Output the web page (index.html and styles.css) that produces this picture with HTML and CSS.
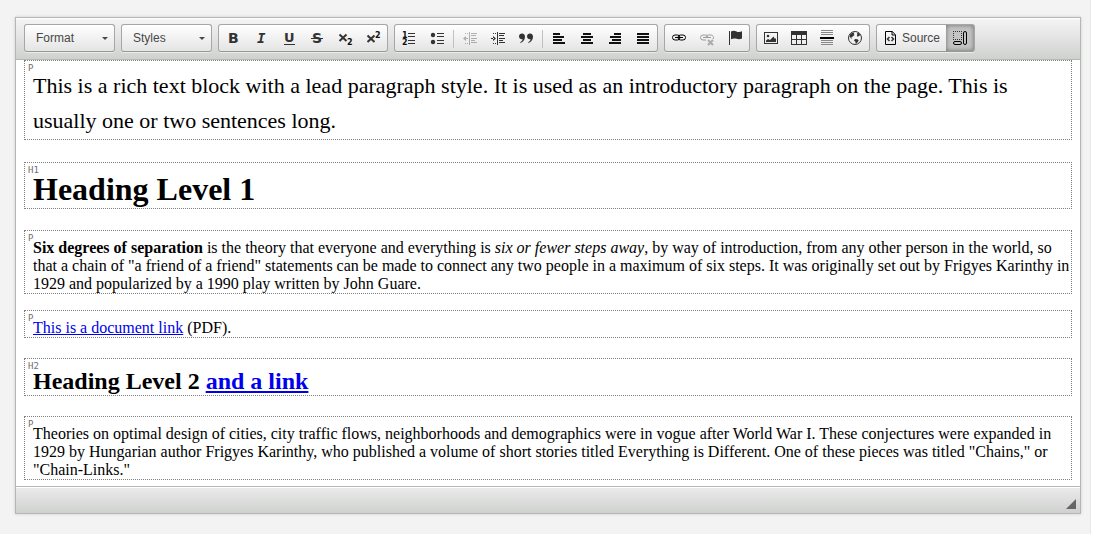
FILE: index.html
```html
<!DOCTYPE html>
<html lang="en">
<head>
<meta charset="utf-8">
<title>Rich text editor</title>
<link rel="stylesheet" href="styles.css">
</head>
<body>
<main class="panel">
<div class="editor">
  <div class="toolbar" role="toolbar" aria-label="Editor toolbar">
    <div class="combo">
      <select class="combo-select" aria-label="Format"><option>Format</option></select>
      <svg class="combo-arrow" viewBox="0 0 6 3" aria-hidden="true"><path d="M0 0h6L3 3z"/></svg>
    </div>
    <div class="combo">
      <select class="combo-select" aria-label="Styles"><option>Styles</option></select>
      <svg class="combo-arrow" viewBox="0 0 6 3" aria-hidden="true"><path d="M0 0h6L3 3z"/></svg>
    </div>

    <div class="group">
      <button class="tool" type="button" aria-label="Bold"><svg class="icon" viewBox="0 0 16 16"><text class="letter" x="3" y="13">B</text></svg></button>
      <button class="tool" type="button" aria-label="Italic"><svg class="icon" viewBox="0 0 16 16"><text class="letter letter-italic" x="4" y="13">I</text></svg></button>
      <button class="tool" type="button" aria-label="Underline"><svg class="icon" viewBox="0 0 16 16"><text class="letter letter-small" x="3" y="12">U</text><path d="M3 14h11v1H3z"/></svg></button>
      <button class="tool" type="button" aria-label="Strikethrough"><svg class="icon" viewBox="0 0 16 16"><text class="letter" x="3" y="13">S</text><path d="M2 8h12v1H2z"/></svg></button>
      <button class="tool" type="button" aria-label="Subscript"><svg class="icon" viewBox="0 0 16 16"><path class="bold-line" d="M2.500 4.500L9.500 11M9.500 4.500l-7 6.500"/><text class="digit" x="10" y="15">2</text></svg></button>
      <button class="tool" type="button" aria-label="Superscript"><svg class="icon" viewBox="0 0 16 16"><path class="bold-line" d="M2.500 5.500L9.500 12M9.500 5.500l-7 6.500"/><text class="digit" x="10" y="8">2</text></svg></button>
    </div>

    <div class="group">
      <button class="tool" type="button" aria-label="Numbered list"><svg class="icon" viewBox="0 0 16 16"><text class="digit" x="1" y="8">1</text><text class="digit" x="1" y="15">2</text><path d="M7 3h7v1H7zM7 6h7v1H7zM7 10h7v1H7zM7 13h7v1H7z"/></svg></button>
      <button class="tool" type="button" aria-label="Bulleted list"><svg class="icon" viewBox="0 0 16 16"><circle cx="4" cy="5" r="2.200"/><circle cx="4" cy="12" r="2.200"/><path d="M8 3h7v1H8zM8 6h7v1H8zM8 10h7v1H8zM8 13h7v1H8z"/></svg></button>
      <span class="separator"></span>
      <button class="tool" type="button" aria-label="Decrease indent" disabled><svg class="icon" viewBox="0 0 16 16"><path d="M7 2h1v13H7zM9 3h6v1H9zM9 5h5v1H9zM9 8h6v1H9zM9 10h4v1H9zM9 12h6v1H9zM3 3h1v1H3zM5 3h1v1H5zM3 13h1v1H3zM5 13h1v1H5zM3 8h3v1H3zM1 8.500L4 6v5z"/></svg></button>
      <button class="tool" type="button" aria-label="Increase indent"><svg class="icon" viewBox="0 0 16 16"><path d="M7 2h1v13H7zM9 3h6v1H9zM9 5h5v1H9zM9 8h6v1H9zM9 10h4v1H9zM9 12h6v1H9zM3 3h1v1H3zM5 3h1v1H5zM3 13h1v1H3zM5 13h1v1H5zM1 8h3v1H1zM6 8.500L3 6v5z"/></svg></button>
      <button class="tool" type="button" aria-label="Block quote"><svg class="icon" viewBox="0 0 16 16"><path d="M4 3.500c2 0 3 1.500 3 3.300 0 3-1.700 5.200-4.500 6.200l-.3-.8c1.500-.8 2.300-1.800 2.400-3C2.600 9.500 1 8.300 1 6.500c0-1.700 1.300-3 3-3zM12 3.500c2 0 3 1.500 3 3.300 0 3-1.700 5.200-4.500 6.200l-.3-.8c1.500-.8 2.300-1.800 2.400-3C10.600 9.500 9 8.300 9 6.500c0-1.700 1.300-3 3-3z"/></svg></button>
      <span class="separator"></span>
      <button class="tool" type="button" aria-label="Align left"><svg class="icon dark" viewBox="0 0 16 16"><path d="M2 3h7v2H2zM2 6h11v2H2zM2 9h9v2H2zM2 12h12v2H2z"/></svg></button>
      <button class="tool" type="button" aria-label="Center"><svg class="icon dark" viewBox="0 0 16 16"><path d="M4 3h8v2H4zM2 6h12v2H2zM4 9h8v2H4zM2 12h12v2H2z"/></svg></button>
      <button class="tool" type="button" aria-label="Align right"><svg class="icon dark" viewBox="0 0 16 16"><path d="M7 3h7v2H7zM3 6h11v2H3zM5 9h9v2H5zM2 12h12v2H2z"/></svg></button>
      <button class="tool" type="button" aria-label="Justify"><svg class="icon dark" viewBox="0 0 16 16"><path d="M2 3h12v2H2zM2 6h12v2H2zM2 9h12v2H2zM2 12h12v2H2z"/></svg></button>
    </div>

    <div class="group">
      <button class="tool" type="button" aria-label="Link"><svg class="icon" viewBox="0 0 16 16"><g class="line line-heavy"><rect x="1.500" y="5" width="7.500" height="5" rx="2.500"/><rect x="7" y="5" width="7.500" height="5" rx="2.500"/><path d="M4 7.500h8"/></g></svg></button>
      <button class="tool" type="button" aria-label="Unlink" disabled><svg class="icon" viewBox="0 0 16 16"><g class="line line-heavy"><path d="M7 10H4a2.500 2.500 0 010-5h2.500A2.500 2.500 0 019 7.500M7 8a2.500 2.500 0 012.500-3H12a2.500 2.500 0 012 4M4 7.500h8"/></g><path class="bold-line" d="M9 10l5 5M14 10l-5 5"/></svg></button>
      <button class="tool" type="button" aria-label="Anchor"><svg class="icon" viewBox="0 0 16 16"><path d="M2 1h1v14H2z"/><path d="M4 1.500c2-1 4-.7 5.500 0 1.800.8 3.700.6 5.500-.3v7.300c-1.800.9-3.700 1-5.500.3C8 8.200 6 8.200 4 9.200z"/></svg></button>
    </div>

    <div class="group">
      <button class="tool" type="button" aria-label="Image"><svg class="icon" viewBox="0 0 16 16"><path fill-rule="evenodd" d="M1 2h14v12H1zM2 3v10h12V3z"/><circle cx="5" cy="6" r="1.300"/><path d="M3 12v-1.500L5 9l2 1 3.500-3.500L12 9l1-1v4z"/></svg></button>
      <button class="tool" type="button" aria-label="Table"><svg class="icon" viewBox="0 0 16 16"><path fill-rule="evenodd" d="M0 1h16v14H0zM1 5v4h4V5zM6 5v4h4V5zM11 5v4h4V5zM1 10v4h4v-4zM6 10v4h4v-4zM11 10v4h4v-4z"/></svg></button>
      <button class="tool" type="button" aria-label="Horizontal line"><svg class="icon" viewBox="0 0 16 16"><path class="soft" d="M2 0h12v1H2zM2 2h12v1H2zM2 4h12v1H2zM2 10h12v1H2zM2 12h12v1H2zM2 14h12v1H2z"/><path class="black" d="M1 7h14v2H1z"/></svg></button>
      <button class="tool" type="button" aria-label="Special content"><svg class="icon" viewBox="0 0 16 16"><circle class="line" cx="8" cy="8" r="6.500"/><path d="M3 4.500L5.500 2.500l2 .3-.8 1.400.8.8-2 1.800-1.300.2 1 1.500-1 0L2.500 6.500zM10 2.500l2 .8 1.500 2.200-1.500.3-1 1-1.200-.8.5-1.500zM8 9l2.500.3 1.200 1.200-1.700 2.500-1.300.8-.3-2L7 10.500z"/></svg></button>
    </div>

    <div class="group">
      <button class="tool tool-text" type="button"><svg class="icon" viewBox="0 0 16 16"><path class="line line-heavy" d="M2.500 1.500h6.700l3.300 3.300v9.700h-10zM9 1.500V5h3.500"/><path class="mark" d="M6.500 7L4.500 9l2 2M8.500 7l2 2-2 2"/></svg><span>Source</span></button>
      <button class="tool tool-pressed" type="button" aria-label="Show blocks" aria-pressed="true"><svg class="icon" viewBox="0 0 16 16"><path class="dots" d="M1 1.500h9M1 9.500h9M1.500 1v9M9.500 1v9"/><rect class="line line-heavy" x="1.500" y="11.500" width="8" height="3" rx="1.500"/><rect class="line line-heavy" x="11.500" y="1.500" width="3" height="13" rx="1.500"/></svg></button>
    </div>
  </div>

  <article class="content">
    <div class="block block-lead"><span class="tag">P</span><p class="lead">This is a rich text block with a lead paragraph style. It is used as an introductory paragraph on the page. This is usually one or two sentences long.</p></div>
    <div class="block block-h1"><span class="tag">H1</span><h1 class="title">Heading Level 1</h1></div>
    <div class="block"><span class="tag">P</span><p class="text"><strong>Six degrees of separation</strong> is the theory that everyone and everything is <em>six or fewer steps away</em>, by way of introduction, from any other person in the world, so that a chain of "a friend of a friend" statements can be made to connect any two people in a maximum of six steps. It was originally set out by Frigyes Karinthy in 1929 and popularized by a 1990 play written by John Guare.</p></div>
    <div class="block"><span class="tag">P</span><p class="text"><a class="link" href="#document">This is a document link</a> (PDF).</p></div>
    <div class="block block-h2"><span class="tag">H2</span><h2 class="subtitle">Heading Level 2 <a class="link" href="#link">and a link</a></h2></div>
    <div class="block"><span class="tag">P</span><p class="text">Theories on optimal design of cities, city traffic flows, neighborhoods and demographics were in vogue after World War I. These conjectures were expanded in 1929 by Hungarian author Frigyes Karinthy, who published a volume of short stories titled Everything is Different. One of these pieces was titled "Chains," or "Chain-Links."</p></div>
  </article>

  <footer class="statusbar"><svg class="resizer" viewBox="0 0 10 10" aria-hidden="true"><path d="M10 0v10H0z"/></svg></footer>
</div>
</main>
</body>
</html>
```
FILE: styles.css
```css
* { box-sizing: border-box; }

body {
  margin: 0;
  padding-right: 10px;
  background: #fff;
  font-family: "Liberation Serif", "Times New Roman", serif;
}

.panel {
  min-height: 100vh;
  padding: 17px 9px 20px 15px;
  border-right: 1px solid #e8e8e8;
  background: #f3f3f3;
}

.editor {
  border: 1px solid #b6b6b6;
  background: #fff;
  box-shadow: 0 0 3px rgba(0, 0, 0, .15);
}

/* Toolbar */
.toolbar {
  display: flex;
  flex-wrap: wrap;
  gap: 6px;
  padding: 6px 8px 7px;
  border-bottom: 1px solid #b6b6b6;
  background: linear-gradient(#f5f5f5, #cfd1cf);
  box-shadow: inset 0 1px 0 #fff;
}

.combo,
.group {
  display: flex;
  height: 28px;
  border: 1px solid #a6a6a6;
  border-bottom-color: #979797;
  border-radius: 3px;
  background: linear-gradient(#fff, #e4e4e4);
  box-shadow: 0 1px 0 rgba(255, 255, 255, .5), inset 0 0 2px rgba(255, 255, 255, .15);
}

.combo {
  align-items: center;
  width: 91px;
  padding-right: 6px;
}

.combo-select {
  flex: 1;
  min-width: 0;
  height: 26px;
  padding: 0 0 0 11px;
  border: 0;
  background: none;
  color: #474747;
  font: 12px "Liberation Sans", Arial, sans-serif;
  appearance: none;
}

.combo-arrow {
  width: 6px;
  height: 3px;
  fill: #474747;
}

.tool {
  display: flex;
  align-items: center;
  padding: 0 6px;
  border: 0;
  background: none;
  color: #474747;
  font: 12px "Liberation Sans", Arial, sans-serif;
}

.tool:disabled .icon { opacity: .35; }

.tool-text {
  gap: 3px;
}

.tool-pressed {
  border-radius: 0 2px 2px 0;
  background: #c4c4c4;
  box-shadow: inset 0 0 5px rgba(0, 0, 0, .45);
}

.separator {
  width: 1px;
  height: 18px;
  margin: 5px 2px 0;
  background: #c0c0c0;
}

/* Icons */
.icon {
  width: 16px;
  height: 16px;
  fill: #333;
}

.dark { fill: #111; }
.black { fill: #000; }
.soft { fill: #888; }

.letter {
  font: bold 14px "DejaVu Sans", sans-serif;
}

.letter-small { font-size: 13px; }

.letter-italic {
  font-family: "DejaVu Sans Mono", monospace;
  font-style: italic;
}

.digit {
  fill: #111;
  font: bold 8px "DejaVu Sans", sans-serif;
}

.line,
.mark,
.dots,
.bold-line {
  fill: none;
  stroke: #333;
  stroke-width: 1;
}

.line-heavy { stroke: #000; }
.mark { stroke-width: 1.5; }
.bold-line { stroke-width: 2; }
.dots { stroke-dasharray: 1 1; }

/* Editable content */
.content {
  padding: 0 8px 6px;
}

.block {
  position: relative;
  margin-bottom: 16px;
  padding: 8px 0 0 8px;
  border: 1px dotted #808080;
}

.block:last-child { margin-bottom: 0; }

.block-lead {
  margin-bottom: 22px;
  padding: 7px 0 1px 8px;
}

.block-h1 { margin-bottom: 21px; }
.block-h2 { margin: 20px 0; }

.tag {
  position: absolute;
  top: 3px;
  left: 3px;
  color: #707070;
  font: 9px/8px "DejaVu Sans Mono", monospace;
}

.lead,
.text,
.title,
.subtitle {
  margin: 0;
}

.lead {
  font-size: 22px;
  line-height: 35px;
}

.text {
  font-size: 16px;
  line-height: 18px;
}

.title {
  font-size: 32px;
  line-height: 37px;
}

.subtitle {
  font-size: 24px;
  line-height: 28px;
}

.link { color: #00e; }

/* Status bar */
.statusbar {
  display: flex;
  justify-content: flex-end;
  align-items: flex-end;
  height: 27px;
  padding: 0 4px 4px;
  border-top: 1px solid #b6b6b6;
  background: linear-gradient(#ebebeb, #cfd1cf);
  box-shadow: inset 0 1px 0 #fff;
}

.resizer {
  width: 10px;
  height: 10px;
  fill: #666;
}
```
